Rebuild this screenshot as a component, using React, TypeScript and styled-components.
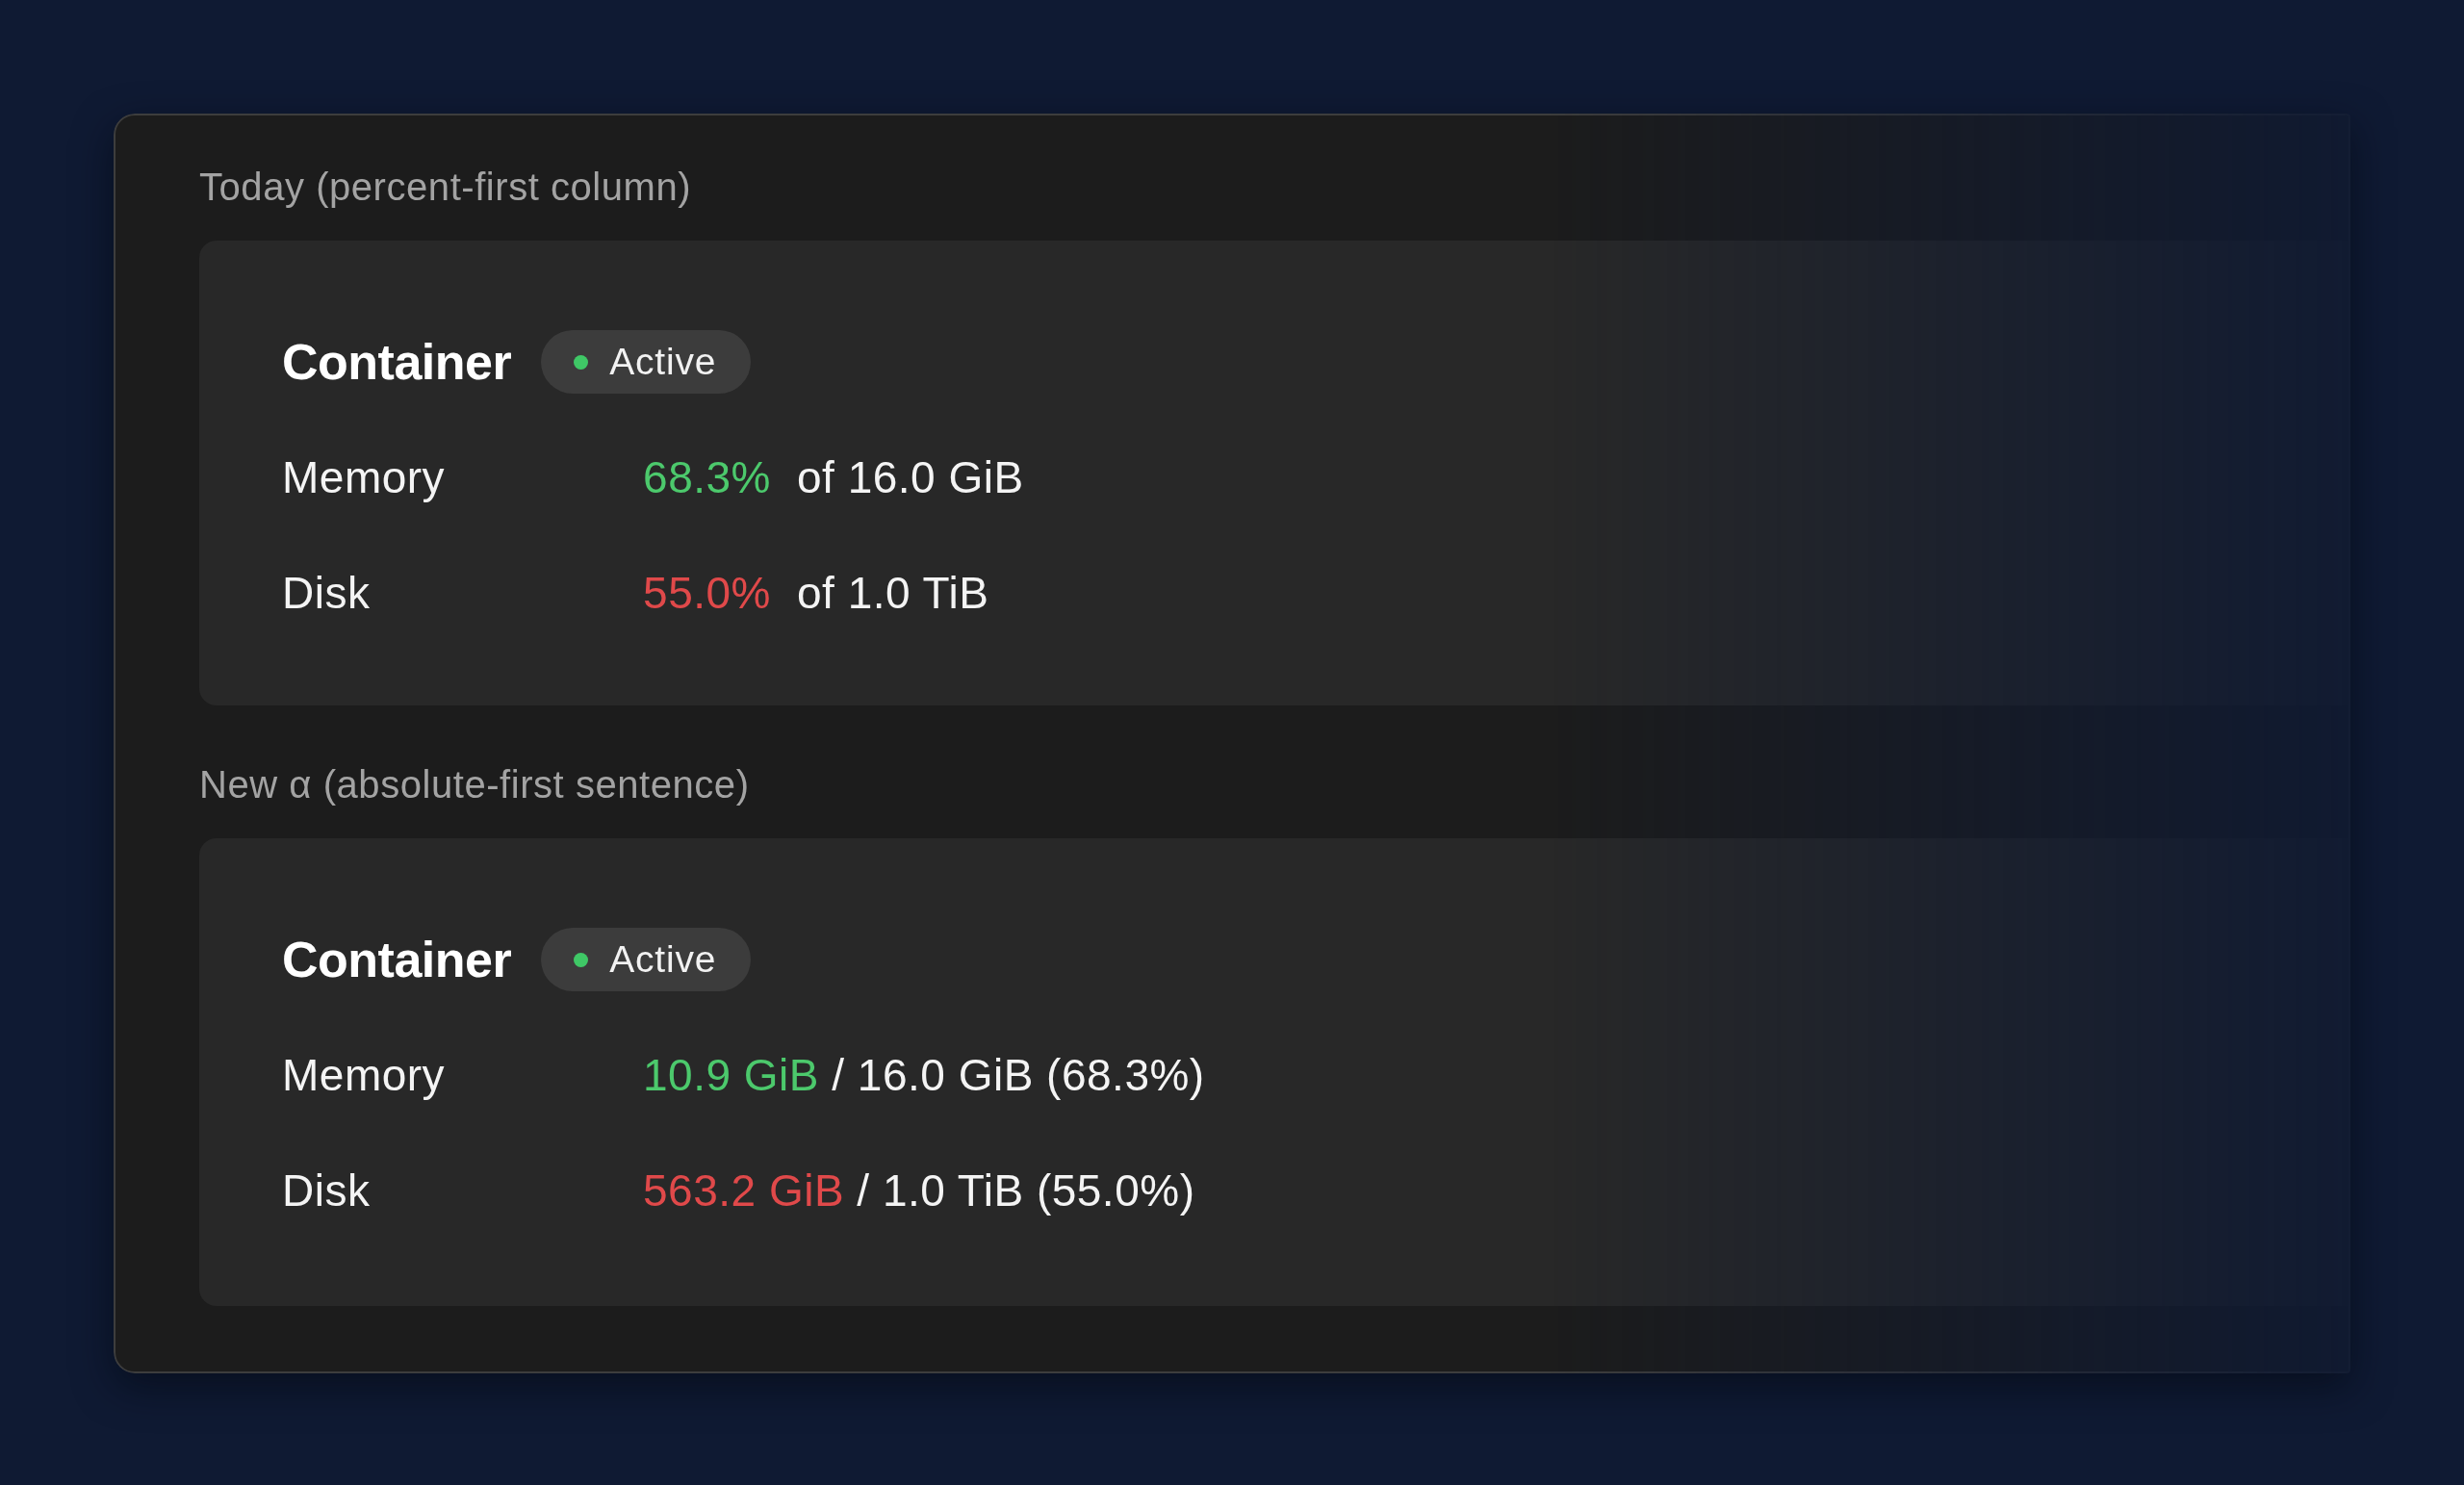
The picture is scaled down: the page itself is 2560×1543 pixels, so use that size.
import React from "react";
import styled, { createGlobalStyle } from "styled-components";

const Global = createGlobalStyle`
  html, body {
    margin: 0;
    padding: 0;
    min-height: 100%;
  }
  body {
    background: #0f1a33;
    min-height: 1543px;
    font-family: "Liberation Sans", Arial, Helvetica, sans-serif;
    -webkit-font-smoothing: antialiased;
  }
`;

const Page = styled.div`
  padding: 118px 118px 0 118px;
  min-height: 1543px;
  box-sizing: border-box;
`;

const Frame = styled.div`
  border-radius: 22px 4px 4px 22px;
  box-shadow: 0 14px 40px rgba(4, 8, 18, 0.6);
`;

const Panel = styled.section`
  background: #1c1c1c;
  border: 2px solid #3d3d3d;
  border-radius: 22px 4px 4px 22px;
  padding: 50px 0 68px 87px;
  overflow: hidden;
  display: flex;
  flex-direction: column;
  -webkit-mask-image: linear-gradient(
    to right,
    #000 0,
    #000 calc(100% - 840px),
    rgba(0, 0, 0, 0.1) 100%
  );
  mask-image: linear-gradient(
    to right,
    #000 0,
    #000 calc(100% - 840px),
    rgba(0, 0, 0, 0.1) 100%
  );
`;

const Section = styled.div<{ $last?: boolean }>`
  display: flex;
  flex-direction: column;
  margin-bottom: ${(p) => (p.$last ? "0" : "58px")};
`;

const SectionLabel = styled.div`
  font-size: 40px;
  line-height: 48px;
  letter-spacing: 0.55px;
  color: #a3a3a3;
  margin-bottom: 32px;
`;

const Card = styled.div<{ $tall?: boolean }>`
  background: #282828;
  border-radius: 18px 0 0 18px;
  padding: 66px 0 ${(p) => (p.$tall ? "60px" : "57px")} 86px;
  display: grid;
  grid-template-columns: 375px 1fr;
  grid-auto-rows: 120px;
  align-items: center;
`;

const TitleRow = styled.div`
  grid-column: 1 / -1;
  display: flex;
  align-items: center;
  gap: 31px;
`;

const Title = styled.h2`
  margin: 0;
  font-size: 52px;
  font-weight: 700;
  letter-spacing: -0.5px;
  color: #ffffff;
  line-height: normal;
`;

const Pill = styled.span`
  display: inline-flex;
  align-items: center;
  gap: 22px;
  height: 66px;
  padding: 0 36px 0 34px;
  border-radius: 33px;
  background: #3c3c3c;
  color: #f2f2f2;
  font-size: 39px;
  letter-spacing: 0.8px;
`;

const Dot = styled.span`
  width: 15px;
  height: 15px;
  border-radius: 50%;
  background: #3fc866;
`;

const RowLabel = styled.div`
  font-size: 46px;
  letter-spacing: 0.5px;
  color: #f4f4f4;
  line-height: normal;
`;

const Value = styled.div`
  font-size: 46px;
  letter-spacing: 0.5px;
  color: #f4f4f4;
  line-height: normal;
  display: flex;
  align-items: baseline;
  white-space: pre;
`;

const Percent = styled.span<{ $tone: "good" | "bad" }>`
  color: ${(p) => (p.$tone === "good" ? "#4cc96c" : "#e0494a")};
  min-width: 133px;
  text-align: right;
  margin-right: 27px;
`;

const Amount = styled.span<{ $tone: "good" | "bad" }>`
  color: ${(p) => (p.$tone === "good" ? "#4cc96c" : "#e0494a")};
`;

type Metric = {
  name: string;
  tone: "good" | "bad";
  percent: string;
  used: string;
  total: string;
};

const metrics: Metric[] = [
  { name: "Memory", tone: "good", percent: "68.3%", used: "10.9 GiB", total: "16.0 GiB" },
  { name: "Disk", tone: "bad", percent: "55.0%", used: "563.2 GiB", total: "1.0 TiB" },
];

const Header = () => (
  <TitleRow>
    <Title>Container</Title>
    <Pill>
      <Dot />
      Active
    </Pill>
  </TitleRow>
);

export default function App() {
  return (
    <>
      <Global />
      <Page>
        <Frame>
          <Panel>
            <Section>
              <SectionLabel>Today (percent-first column)</SectionLabel>
              <Card>
                <Header />
                {metrics.map((m) => (
                  <React.Fragment key={m.name}>
                    <RowLabel>{m.name}</RowLabel>
                    <Value>
                      <Percent $tone={m.tone}>{m.percent}</Percent>
                      {`of ${m.total}`}
                    </Value>
                  </React.Fragment>
                ))}
              </Card>
            </Section>
            <Section $last>
              <SectionLabel>New α (absolute-first sentence)</SectionLabel>
              <Card $tall>
                <Header />
                {metrics.map((m) => (
                  <React.Fragment key={m.name}>
                    <RowLabel>{m.name}</RowLabel>
                    <Value>
                      <Amount $tone={m.tone}>{m.used}</Amount>
                      {` / ${m.total} (${m.percent})`}
                    </Value>
                  </React.Fragment>
                ))}
              </Card>
            </Section>
          </Panel>
        </Frame>
      </Page>
    </>
  );
}
